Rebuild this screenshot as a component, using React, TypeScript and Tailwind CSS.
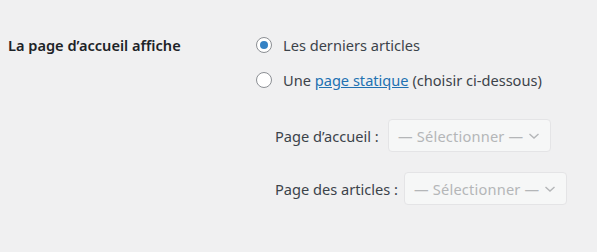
function Radio({ checked }: { checked?: boolean }) {
  return (
    <span className="flex h-4 w-4 shrink-0 items-center justify-center rounded-full border border-[#8c8f94] bg-white">
      {checked && <span className="h-2 w-2 rounded-full bg-[#3582c4]" />}
    </span>
  );
}

function DisabledSelect() {
  return (
    <div className="flex h-[33px] w-[163px] items-center justify-between rounded-[4px] border border-[#e4e4e6] bg-[#f6f7f7] pl-[9px] pr-[10px] text-[#b4b6b8]">
      <span className="tracking-[0.2px]">— Sélectionner —</span>
      <svg width="12" height="12" viewBox="0 0 12 12" fill="none">
        <path d="M1.5 4 L6 8 L10.5 4" stroke="#b4b6b8" strokeWidth="1.4" />
      </svg>
    </div>
  );
}

export default function App() {
  return (
    <div
      className="h-[252px] w-[597px] bg-[#f0f0f1] text-[14.6px] leading-5 text-[#3c434a]"
      style={{ fontFamily: '"Noto Sans", "Open Sans", sans-serif' }}
    >
      <div className="flex pl-2 pt-[35px]">
        {/* label column */}
        <div className="w-[248px] font-semibold text-[#1d2327]">La page d’accueil affiche</div>

        {/* options */}
        <div className="flex flex-col">
          <label className="flex items-center gap-[11px]">
            <Radio checked />
            <span>Les derniers articles</span>
          </label>
          <label className="mt-[15px] flex items-center gap-[11px]">
            <Radio />
            <span>
              Une <a className="text-[#2271b1] underline">page statique</a> (choisir ci-dessous)
            </span>
          </label>

          <div className="mt-[29px] flex flex-col gap-[20px] pl-[19px]">
            <div className="flex items-center">
              <span className="w-[113px]">Page d’accueil :</span>
              <DisabledSelect />
            </div>
            <div className="flex items-center">
              <span className="w-[129px]">Page des articles :</span>
              <DisabledSelect />
            </div>
          </div>
        </div>
      </div>
    </div>
  );
}
